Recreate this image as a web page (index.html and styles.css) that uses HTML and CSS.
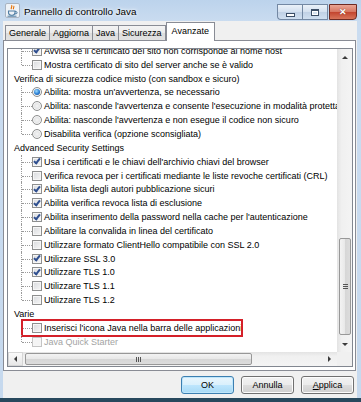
FILE: index.html
```html
<!DOCTYPE html>
<html lang="it">
<head>
    <meta charset="UTF-8" />
    <title>Pannello di controllo Java</title>
    <link rel="stylesheet" href="styles.css">
</head>
<body>
    <div class="window">
        <div class="titlebar">
            <svg class="app-icon" width="15" height="15" viewBox="0 0 15 15">
                <rect x="0.5" y="0.5" width="14" height="14" rx="1.5" fill="#eef2f7" stroke="#a9b4c2"/>
                <path d="M6.5 2.2c1.6 1.4-1.4 2.4 0 4M8.6 3c1.2 1-1 1.8 0 3.2" stroke="#e76f00" stroke-width="1.1" fill="none"/>
                <path d="M3.5 8h6.5v1.6a2.6 2.6 0 0 1-2.6 2.6H6.1a2.6 2.6 0 0 1-2.6-2.6z" fill="none" stroke="#4f7da3" stroke-width="1.1"/>
                <path d="M10 8.6h1a1.1 1.1 0 0 1 0 2.2h-1" stroke="#4f7da3" fill="none"/>
                <path d="M2.5 13.2h9" stroke="#4f7da3"/>
            </svg>
            <span class="title">Pannello di controllo Java</span>
            <div class="caption">
                <span class="cbtn min"></span>
                <span class="cbtn max"></span>
                <span class="cbtn close"></span>
            </div>
        </div>

        <div class="client">
            <div class="tabs">
                <span class="tab">Generale</span>
                <span class="tab">Aggiorna</span>
                <span class="tab">Java</span>
                <span class="tab">Sicurezza</span>
                <span class="tab active">Avanzate</span>
            </div>

            <div class="panel">
                <div class="pane">
                    <div class="viewport">
                        <div class="tree">
                            <div class="kids">
                                <div class="row item"><i class="twig"></i><span class="box on"></span><span>Avvisa se il certificato del sito non corrisponde al nome host</span></div>
                                <div class="row item last"><i class="twig"></i><span class="box"></span><span>Mostra certificato di sito del server anche se è valido</span></div>
                            </div>

                            <div class="row head">Verifica di sicurezza codice misto (con sandbox e sicuro)</div>
                            <div class="kids">
                                <div class="row item"><i class="twig"></i><span class="radio on"></span><span>Abilita: mostra un'avvertenza, se necessario</span></div>
                                <div class="row item"><i class="twig"></i><span class="radio"></span><span>Abilita: nasconde l'avvertenza e consente l'esecuzione in modalità protetta</span></div>
                                <div class="row item"><i class="twig"></i><span class="radio"></span><span>Abilita: nasconde l'avvertenza e non esegue il codice non sicuro</span></div>
                                <div class="row item last"><i class="twig"></i><span class="radio"></span><span>Disabilita verifica (opzione sconsigliata)</span></div>
                            </div>

                            <div class="row head">Advanced Security Settings</div>
                            <div class="kids">
                                <div class="row item"><i class="twig"></i><span class="box on"></span><span>Usa i certificati e le chiavi dell'archivio chiavi del browser</span></div>
                                <div class="row item"><i class="twig"></i><span class="box"></span><span>Verifica revoca per i certificati mediante le liste revoche certificati (CRL)</span></div>
                                <div class="row item"><i class="twig"></i><span class="box on"></span><span>Abilita lista degli autori pubblicazione sicuri</span></div>
                                <div class="row item"><i class="twig"></i><span class="box on"></span><span>Abilita verifica revoca lista di esclusione</span></div>
                                <div class="row item"><i class="twig"></i><span class="box on"></span><span>Abilita inserimento della password nella cache per l'autenticazione</span></div>
                                <div class="row item"><i class="twig"></i><span class="box"></span><span>Abilitare la convalida in linea del certificato</span></div>
                                <div class="row item"><i class="twig"></i><span class="box"></span><span>Utilizzare formato ClientHello compatibile con SSL 2.0</span></div>
                                <div class="row item"><i class="twig"></i><span class="box on"></span><span>Utilizzare SSL 3.0</span></div>
                                <div class="row item"><i class="twig"></i><span class="box on"></span><span>Utilizzare TLS 1.0</span></div>
                                <div class="row item"><i class="twig"></i><span class="box"></span><span>Utilizzare TLS 1.1</span></div>
                                <div class="row item last"><i class="twig"></i><span class="box"></span><span>Utilizzare TLS 1.2</span></div>
                            </div>

                            <div class="row head">Varie</div>
                            <div class="kids">
                                <div class="row item flagged"><i class="twig"></i><span class="box"></span><span>Inserisci l'icona Java nella barra delle applicazioni</span></div>
                                <div class="row item last disabled"><i class="twig"></i><span class="box"></span><span>Java Quick Starter</span></div>
                            </div>
                        </div>
                    </div>

                    <div class="vscroll">
                        <span class="sb-btn"><i class="arrow up"></i></span>
                        <div class="track">
                            <span class="thumb vthumb"><i class="grip"></i></span>
                        </div>
                        <span class="sb-btn"><i class="arrow down"></i></span>
                    </div>

                    <div class="hscroll">
                        <span class="sb-btn"><i class="arrow left"></i></span>
                        <div class="track">
                            <span class="thumb hthumb"><i class="grip"></i></span>
                        </div>
                        <span class="sb-btn"><i class="arrow right"></i></span>
                    </div>
                    <div class="corner"></div>
                </div>
            </div>

            <div class="buttons">
                <button class="btn default">OK</button>
                <button class="btn">Annulla</button>
                <button class="btn"><u>A</u>pplica</button>
            </div>
        </div>
    </div>
</body>
</html>
```

FILE: styles.css
```css
body {
    margin: 0;
    background-color: #27485d;
    font-family: "Liberation Sans", Arial, sans-serif;
    font-size: 9px;
    color: #000;
}
.window {
    width: 361px;
    height: 398px;
    box-sizing: border-box;
    padding: 0 4px 0 3px;
    display: flex;
    flex-direction: column;
    background: linear-gradient(#bcd3ec, #cadcf0 22px, #c6d9ee);
}

/* title bar */
.titlebar {
    height: 21px;
    display: flex;
    align-items: center;
}
.app-icon {
    margin: 0 4px 0 2px;
}
.title {
    font-size: 9.9px;
    text-shadow: 0 0 5px #fff, 0 0 3px #fff;
    flex: 1;
    padding-top: 2px;
}
.caption {
    display: flex;
    align-self: flex-start;
    margin-top: 4px;
    gap: 0;
}
.cbtn {
    height: 14px;
    border: 1px solid #7388a3;
    display: flex;
    align-items: center;
    justify-content: center;
    background: linear-gradient(#eaf1f9, #d3e0ef 50%, #bfd0e5 50%, #d0dff0);
}
.cbtn.min {
    width: 24px;
    border-radius: 0 0 0 4px;
    border-right: none;
}
.cbtn.max {
    width: 24px;
}
.cbtn.close {
    width: 26px;
    margin-left: 1px;
    border-color: #6e2a22;
    border-radius: 0 0 4px 0;
    background: linear-gradient(#eba594, #d67560 50%, #c2432d 50%, #d8745a);
}
.cbtn.min::after {
    content: '';
    width: 7px;
    height: 2px;
    margin-top: 5px;
    background: #fff;
    border: 1px solid #3c4e66;
}
.cbtn.max::after {
    content: '';
    width: 6px;
    height: 4px;
    border: 1px solid #3c4e66;
    border-top-width: 2px;
    box-shadow: inset 0 0 0 1px #fff;
    background: #d6e2f0;
}
.cbtn.close::after {
    content: '\2715';
    color: #fff;
    font-size: 9px;
    font-weight: bold;
    text-shadow: 0 0 1px #5a1810;
}

/* client area */
.client {
    flex: 1;
    background-color: #f0f0f0;
    display: flex;
    flex-direction: column;
}
.tabs {
    height: 19px;
    display: flex;
    align-items: flex-end;
    padding-left: 2px;
}
.tab {
    height: 15px;
    line-height: 15px;
    padding: 0 3px;
    border: 1px solid #898c95;
    border-bottom: none;
    margin-right: -1px;
    box-sizing: border-box;
    background: linear-gradient(#f4f4f4, #ebebeb 50%, #dcdcdc 50%, #e2e2e2);
    color: #000;
}
.tab.active {
    height: 19px;
    line-height: 17px;
    margin: 0 0 -1px 1px;
    padding: 0 5px;
    background: #fff;
    position: relative;
    z-index: 1;
}
.panel {
    height: 331px;
    box-sizing: border-box;
    margin-right: 1px;
    border: 1px solid #898c95;
    background-color: #fff;
    padding: 7px 2px 3px 3px;
}
.pane {
    height: 100%;
    box-sizing: border-box;
    border: 1px solid #828790;
    display: grid;
    grid-template-columns: 1fr 15px;
    grid-template-rows: 1fr 14px;
}
.viewport {
    overflow: hidden;
}
.tree {
    margin-top: -5px;
    padding-left: 6px;
}
.row {
    height: 13.85px;
    display: flex;
    align-items: center;
    white-space: nowrap;
}
.kids {
    margin-left: 7px;
}
.twig {
    width: 11px;
    align-self: stretch;
    position: relative;
    flex-shrink: 0;
}
.twig::before {
    content: '';
    position: absolute;
    left: 0;
    top: 0;
    bottom: 0;
    border-left: 1px dotted #9a9a9a;
}
.twig::after {
    content: '';
    position: absolute;
    left: 1px;
    right: 0;
    top: 50%;
    border-top: 1px dotted #9a9a9a;
}
.last .twig::before {
    bottom: 50%;
}
.box,
.radio {
    width: 10px;
    height: 10px;
    box-sizing: border-box;
    flex-shrink: 0;
    margin-right: 2px;
    border: 1px solid #8e8f8f;
    display: flex;
    align-items: center;
    justify-content: center;
    background: linear-gradient(135deg, #d8dadd, #f7f7f7);
    box-shadow: inset 0 0 0 1px #f6f6f6;
}
.box.on::after {
    content: '';
    width: 2px;
    height: 5px;
    margin-top: -2px;
    border: solid #2f4f8f;
    border-width: 0 2px 2px 0;
    transform: rotate(38deg);
}
.radio {
    border-radius: 50%;
    background: radial-gradient(#f4f4f4, #d2d4d6);
}
.radio.on::after {
    content: '';
    width: 6px;
    height: 6px;
    border-radius: 50%;
    background: radial-gradient(circle at 40% 35%, #9fdcff, #2a7fd4 55%, #0d3d8a);
}
.disabled {
    color: #a3a3a3;
}
.disabled .box {
    border-color: #c4c4c4;
    background: #f4f4f4;
}
.flagged {
    position: relative;
}
.flagged::after {
    content: '';
    position: absolute;
    left: 0;
    top: -2px;
    width: 222px;
    height: 18px;
    box-sizing: border-box;
    border: 2px solid #d42029;
}

/* scrollbars */
.vscroll,
.hscroll {
    display: flex;
    background: linear-gradient(90deg, #e3e3e3, #f0f0f0 30%, #f4f4f4);
}
.vscroll {
    flex-direction: column;
}
.hscroll {
    background: linear-gradient(#e3e3e3, #f0f0f0 30%, #f4f4f4);
}
.sb-btn {
    width: 15px;
    height: 16px;
    display: flex;
    align-items: center;
    justify-content: center;
    flex-shrink: 0;
}
.hscroll .sb-btn {
    height: 14px;
}
.hscroll .sb-btn:first-child {
    border: 1px solid #d6d6d6;
    box-sizing: border-box;
    background: linear-gradient(#fafafa, #e8e8e8);
}
.arrow {
    width: 0;
    height: 0;
    border: 3px solid transparent;
}
.arrow.up {
    border-bottom: 3px solid #3b3b3b;
    margin-top: -3px;
}
.arrow.down {
    border-top: 3px solid #3b3b3b;
    margin-bottom: -3px;
}
.arrow.left {
    border-right: 3px solid #3b3b3b;
    margin-left: -3px;
}
.arrow.right {
    border-left: 3px solid #3b3b3b;
    margin-right: -3px;
}
.track {
    flex: 1;
    display: flex;
}
.vscroll .track {
    flex-direction: column;
}
.thumb {
    box-sizing: border-box;
    border: 1px solid #989898;
    border-radius: 2px;
    display: flex;
    align-items: center;
    justify-content: center;
}
.vthumb {
    height: 97px;
    margin: 173px 1px 0 2px;
    background: linear-gradient(90deg, #f3f3f3, #e8e8e8 50%, #d6d6d6 50%, #dcdcdc);
}
.hthumb {
    width: 227px;
    margin: 1px 0 1px 2px;
    background: linear-gradient(#f3f3f3, #e8e8e8 50%, #d6d6d6 50%, #dcdcdc);
}
.vthumb .grip {
    width: 5px;
    height: 5px;
    background: repeating-linear-gradient(#555 0 1px, transparent 1px 2px);
}
.hthumb .grip {
    width: 5px;
    height: 5px;
    background: repeating-linear-gradient(90deg, #555 0 1px, transparent 1px 2px);
}
.corner {
    background-color: #f0f0f0;
}

/* dialog buttons */
.buttons {
    flex: 1;
    display: flex;
    justify-content: flex-end;
    align-items: center;
    gap: 7px;
    padding-right: 3px;
}
.btn {
    width: 53px;
    height: 18px;
    padding: 0;
    font-family: inherit;
    font-size: 9px;
    color: #000;
    border: 1px solid #707070;
    border-radius: 3px;
    background: linear-gradient(#f2f2f2, #ebebeb 50%, #dddddd 50%, #cfcfcf);
    box-shadow: inset 0 0 0 1px #fcfcfc;
}
.btn.default {
    border-color: #3c7fb1;
    background: linear-gradient(#eaf6fd, #d9f0fc 50%, #bee6fd 50%, #a7d9f5);
    box-shadow: inset 0 0 0 1px #bfe6fb;
}
```
